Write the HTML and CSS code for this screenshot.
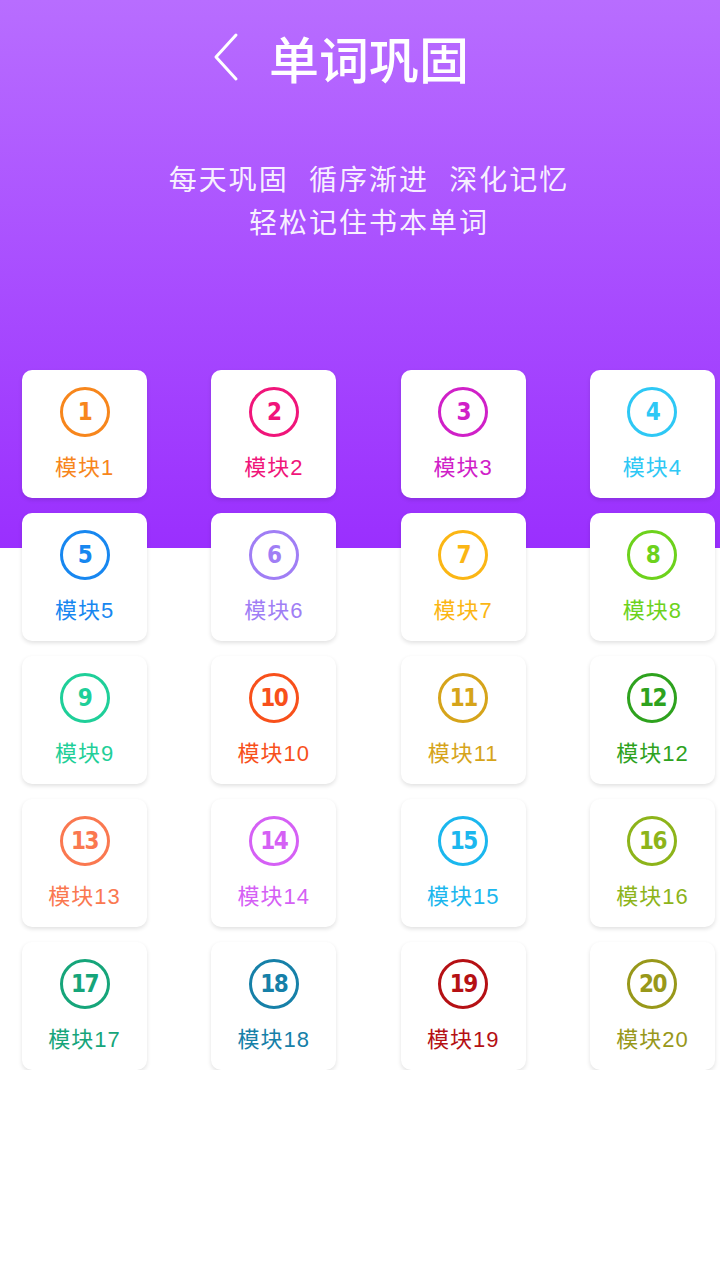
FILE: index.html
```html
<!DOCTYPE html>
<html lang="zh-CN">
<head>
  <meta charset="UTF-8">
  <meta name="viewport" content="width=device-width, initial-scale=1.0">
  <title>单词巩固</title>
  <link rel="stylesheet" href="styles.css">
</head>
<body>

  <div class="hero">
    <div class="topbar">
      <svg class="back" width="26" height="50" viewBox="0 0 26 50">
        <polyline points="23,3 3,25 23,47" fill="none" stroke="#fff" stroke-width="3" stroke-linecap="round" stroke-linejoin="round"/>
      </svg>
      <h1>单词巩固</h1>
    </div>
    <p class="slogan">每天巩固 循序渐进 深化记忆<br>轻松记住书本单词</p>
  </div>

  <ul class="modules">
    <li class="module m1"><span class="num">1</span><span class="name">模块1</span></li>
    <li class="module m2"><span class="num">2</span><span class="name">模块2</span></li>
    <li class="module m3"><span class="num">3</span><span class="name">模块3</span></li>
    <li class="module m4"><span class="num">4</span><span class="name">模块4</span></li>
    <li class="module m5"><span class="num">5</span><span class="name">模块5</span></li>
    <li class="module m6"><span class="num">6</span><span class="name">模块6</span></li>
    <li class="module m7"><span class="num">7</span><span class="name">模块7</span></li>
    <li class="module m8"><span class="num">8</span><span class="name">模块8</span></li>
    <li class="module m9"><span class="num">9</span><span class="name">模块9</span></li>
    <li class="module m10"><span class="num">10</span><span class="name">模块10</span></li>
    <li class="module m11"><span class="num">11</span><span class="name">模块11</span></li>
    <li class="module m12"><span class="num">12</span><span class="name">模块12</span></li>
    <li class="module m13"><span class="num">13</span><span class="name">模块13</span></li>
    <li class="module m14"><span class="num">14</span><span class="name">模块14</span></li>
    <li class="module m15"><span class="num">15</span><span class="name">模块15</span></li>
    <li class="module m16"><span class="num">16</span><span class="name">模块16</span></li>
    <li class="module m17"><span class="num">17</span><span class="name">模块17</span></li>
    <li class="module m18"><span class="num">18</span><span class="name">模块18</span></li>
    <li class="module m19"><span class="num">19</span><span class="name">模块19</span></li>
    <li class="module m20"><span class="num">20</span><span class="name">模块20</span></li>
  </ul>

</body>
</html>
```

FILE: styles.css
```css
body {
  font-family: 'Noto Sans CJK SC', 'Noto Sans', sans-serif;
  background-color: #fff;
  margin: 0;
  padding: 0;
}
.hero {
  height: 548px;
  box-sizing: border-box;
  padding-top: 29px;
  background: linear-gradient(#b86dff, #9a2ffe);
  color: white;
  text-align: center;
}
.topbar {
  display: flex;
  justify-content: center;
  align-items: center;
  gap: 30px;
  height: 56px;
  padding-right: 38px;
}
.topbar h1 {
  margin: 0;
  font-size: 50px;
  font-weight: 500;
  line-height: 56px;
}
.slogan {
  margin: 72px 0 0;
  padding-left: 18px;
  font-size: 28px;
  line-height: 43px;
  letter-spacing: 2px;
  word-spacing: 12px;
  color: rgba(255, 255, 255, 0.93);
}
.modules {
  list-style: none;
  margin: -178px 0 0;
  padding: 0 5px 0 22px;
  display: grid;
  grid-template-columns: repeat(4, 125px);
  justify-content: space-between;
  row-gap: 15px;
}
.module {
  height: 128px;
  box-sizing: border-box;
  padding-top: 17px;
  background: white;
  border-radius: 10px;
  box-shadow: 0 2px 4px rgba(0, 0, 0, 0.12);
  display: flex;
  flex-direction: column;
  align-items: center;
}
.num {
  width: 50px;
  height: 50px;
  box-sizing: border-box;
  border: 3px solid currentColor;
  border-radius: 50%;
  display: flex;
  justify-content: center;
  align-items: center;
  font-family: 'DejaVu Sans Condensed', 'DejaVu Sans', sans-serif;
  font-stretch: condensed;
  font-weight: bold;
  font-size: 24px;
  letter-spacing: -1.5px;
}
.name {
  margin-top: 16px;
  font-family: 'Liberation Sans', 'Noto Sans CJK SC', sans-serif;
  font-size: 22px;
  line-height: 30px;
  letter-spacing: 1px;
}
.m1 { color: #f7861c; }
.m2 { color: #f0157a; }
.m3 { color: #d020c8; }
.m4 { color: #2ec8f5; }
.m5 { color: #1787f0; }
.m6 { color: #a07ef5; }
.m7 { color: #fbb614; }
.m8 { color: #6dd21c; }
.m9 { color: #1fcf99; }
.m10 { color: #f8501b; }
.m11 { color: #d6a41a; }
.m12 { color: #2ea21e; }
.m13 { color: #fa7850; }
.m14 { color: #d560f5; }
.m15 { color: #1bb7ee; }
.m16 { color: #8db41a; }
.m17 { color: #16a57a; }
.m18 { color: #1680a8; }
.m19 { color: #b51014; }
.m20 { color: #98981a; }
```
